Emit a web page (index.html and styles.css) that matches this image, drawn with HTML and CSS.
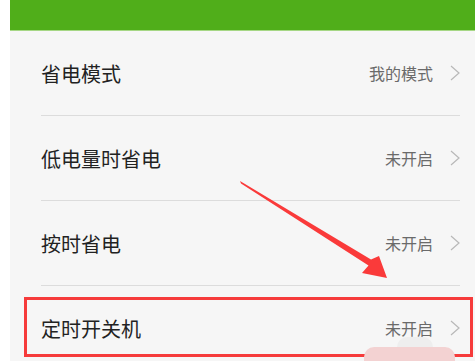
FILE: index.html
```html
<!DOCTYPE html>
<html lang="zh">
<head>
<meta charset="utf-8">
<link rel="stylesheet" href="styles.css">
</head>
<body>
<div class="page">
  <div class="topbar"></div>
  <ul class="list">
    <li class="row"><span class="label">省电模式</span><span class="value">我的模式</span><span class="chev"><svg width="10" height="16" viewBox="0 0 10 16"><path d="M1 1 L9 8 L1 15" fill="none" stroke="#b8b8b8" stroke-width="1.2"/></svg></span></li>
    <li class="row"><span class="label">低电量时省电</span><span class="value">未开启</span><span class="chev"><svg width="10" height="16" viewBox="0 0 10 16"><path d="M1 1 L9 8 L1 15" fill="none" stroke="#b8b8b8" stroke-width="1.2"/></svg></span></li>
    <li class="row"><span class="label">按时省电</span><span class="value">未开启</span><span class="chev"><svg width="10" height="16" viewBox="0 0 10 16"><path d="M1 1 L9 8 L1 15" fill="none" stroke="#b8b8b8" stroke-width="1.2"/></svg></span></li>
    <li class="row"><span class="label">定时开关机</span><span class="value">未开启</span><span class="chev"><svg width="10" height="16" viewBox="0 0 10 16"><path d="M1 1 L9 8 L1 15" fill="none" stroke="#b8b8b8" stroke-width="1.2"/></svg></span></li>
  </ul>
</div>
<div class="highlight"></div>
<div class="blob2"></div>
<div class="blob"></div>
<svg class="arrow" width="475" height="361" viewBox="0 0 475 361">
  <polygon points="240,181 371,259.5 379,256 387,278 362,273 368.5,265.5 241,183.5" fill="#fa3a3a"/>
</svg>
</body>
</html>
```

FILE: styles.css
```css
html, body {
  margin: 0;
  padding: 0;
  background: #ffffff;
  width: 475px;
  height: 361px;
  overflow: hidden;
  font-family: "Noto Sans CJK SC", "Noto Sans", sans-serif;
}
.page {
  margin-left: 10px;
  height: 361px;
  background: #f6f6f6;
}
.topbar {
  height: 30px;
  background: #50ae1a;
  border-bottom: 1px solid #a6d785;
}
.list {
  list-style: none;
  margin: 0;
  padding: 0;
}
.row {
  display: flex;
  align-items: center;
  height: 84px;
  margin: 0 15px 0 31px;
  border-bottom: 1px solid #dcdcdc;
}
.label {
  flex: 1;
  font-size: 20px;
  color: #222222;
}
.value {
  font-size: 16px;
  color: #6a6a6a;
}
.chev {
  display: flex;
  margin-left: 17px;
  width: 10px;
}
.highlight {
  position: absolute;
  left: 24px;
  top: 297px;
  width: 443px;
  height: 54px;
  border: 3px solid #f63b3b;
}
.blob {
  position: absolute;
  left: 364px;
  top: 347px;
  width: 91px;
  height: 24px;
  border-radius: 10px;
  background: #f3d2d2;
}
.blob2 {
  position: absolute;
  left: 397px;
  top: 337px;
  width: 36px;
  height: 20px;
  border-radius: 12px;
  background: #ececec;
  opacity: 0.8;
}
.arrow {
  position: absolute;
  left: 0;
  top: 0;
}
```
